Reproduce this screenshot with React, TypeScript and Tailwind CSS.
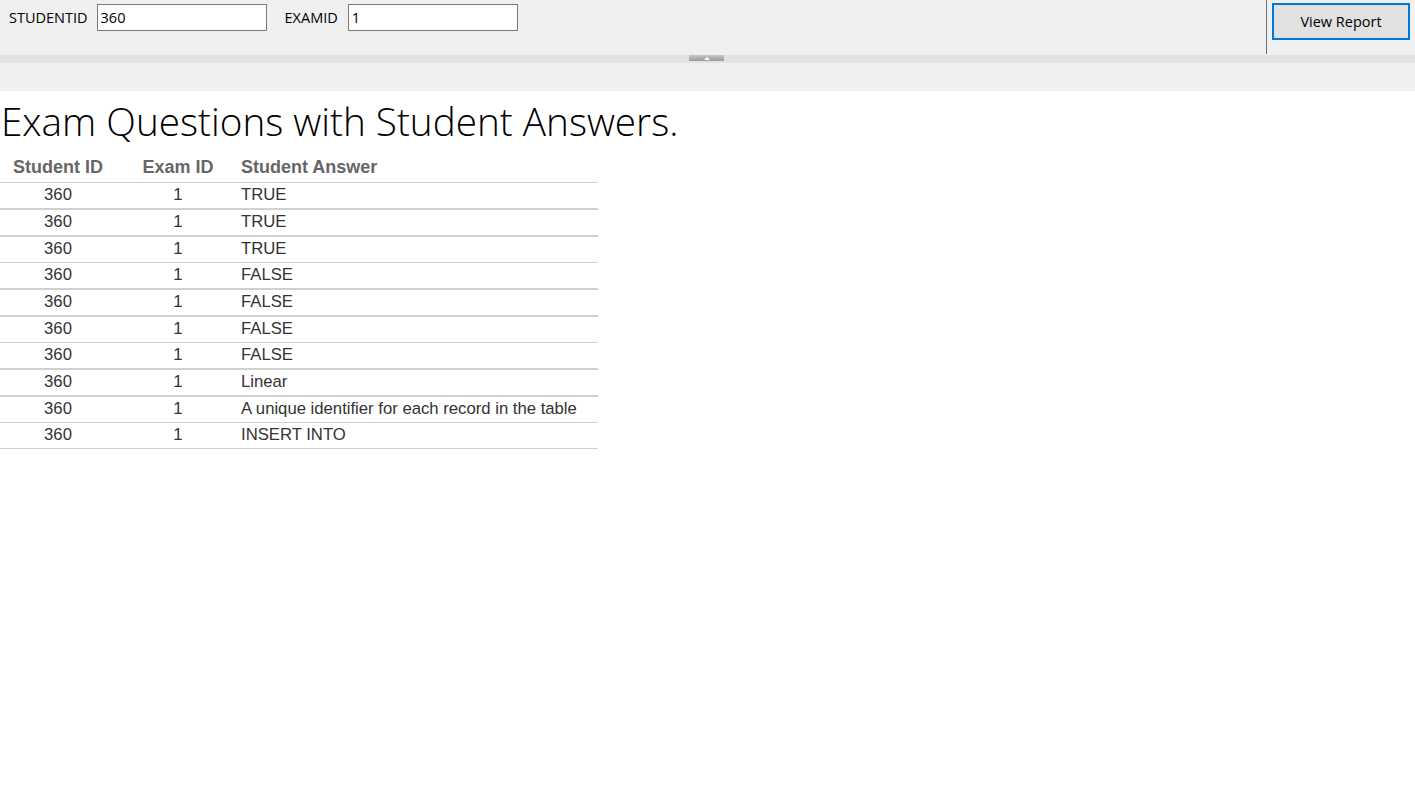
import { useState } from "react";

const rows = [
  { answer: "TRUE", thick: true },
  { answer: "TRUE", thick: true },
  { answer: "TRUE", thick: false },
  { answer: "FALSE", thick: true },
  { answer: "FALSE", thick: true },
  { answer: "FALSE", thick: false },
  { answer: "FALSE", thick: true },
  { answer: "Linear", thick: true },
  { answer: "A unique identifier for each record in the table", thick: false },
  { answer: "INSERT INTO", thick: false },
];

function Toolbar() {
  const [studentId, setStudentId] = useState("360");
  const [examId, setExamId] = useState("1");

  return (
    <div className="h-[55px] bg-[#f0f0f0] flex font-['Open_Sans',sans-serif] text-[14.5px] text-black">
      <div className="flex-1 flex items-start pt-[4px]">
        <label className="ml-[9px] mr-[9px] h-[27px] flex items-center">STUDENTID</label>
        <input
          value={studentId}
          onChange={(e) => setStudentId(e.target.value)}
          className="w-[170px] h-[27px] border border-[#7a7a7a] bg-white px-[3px] outline-none"
        />
        <label className="ml-[18px] mr-[10px] h-[27px] flex items-center">EXAMID</label>
        <input
          value={examId}
          onChange={(e) => setExamId(e.target.value)}
          className="w-[170px] h-[27px] border border-[#7a7a7a] bg-white px-[3px] outline-none"
        />
      </div>
      <div className="w-[149px] border-l border-[#6d6d6d] h-[54px] flex items-start pt-[3px] pl-[5px]">
        <button className="w-[138px] h-[37px] border-2 border-[#0078d7] bg-[#e1e1e1] text-[14.5px]">
          View Report
        </button>
      </div>
    </div>
  );
}

function Splitter() {
  return (
    <>
      <div className="h-[8px] bg-[#e3e3e3] flex justify-center">
        <div className="w-[35px] h-[6px] bg-gradient-to-b from-[#c8c8c8] to-[#9a9a9a] flex items-center justify-center ml-[-2px]">
          <div className="w-0 h-0 border-l-[3px] border-r-[3px] border-b-[3px] border-l-transparent border-r-transparent border-b-white" />
        </div>
      </div>
      <div className="h-[28px] bg-[#f0f0f0]" />
    </>
  );
}

export default function App() {
  return (
    <div className="w-[1415px] h-[799px] bg-white overflow-hidden">
      <Toolbar />
      <Splitter />
      <h1 className="pt-[7px] pl-[1px] h-[51px] text-[38.7px] leading-[46px] font-light text-black font-['Open_Sans',sans-serif] whitespace-nowrap">
        Exam Questions with Student Answers.
      </h1>
      <div className="w-[598px] font-['Liberation_Sans',Arial,sans-serif] text-[16.7px]">
        <div className="h-[41px] border-b border-[#d0d0d0] flex items-end pb-[3px] font-bold text-[18px] text-[#666666] leading-[24px]">
          <div className="w-[116px] text-center">Student ID</div>
          <div className="w-[124px] text-center">Exam ID</div>
          <div className="pl-[1px]">Student Answer</div>
        </div>
        {rows.map((r, i) => (
          <div
            key={i}
            className={
              r.thick
                ? "h-[27px] border-b-2 border-[#d0d0d0] flex items-center text-[#333333] leading-[23px] pb-[2px]"
                : "h-[26px] border-b border-[#d0d0d0] flex items-center text-[#333333] leading-[23px] pb-[2px]"
            }
          >
            <div className="w-[116px] text-center">360</div>
            <div className="w-[124px] text-center">1</div>
            <div className="pl-[1px]">{r.answer}</div>
          </div>
        ))}
      </div>
    </div>
  );
}
